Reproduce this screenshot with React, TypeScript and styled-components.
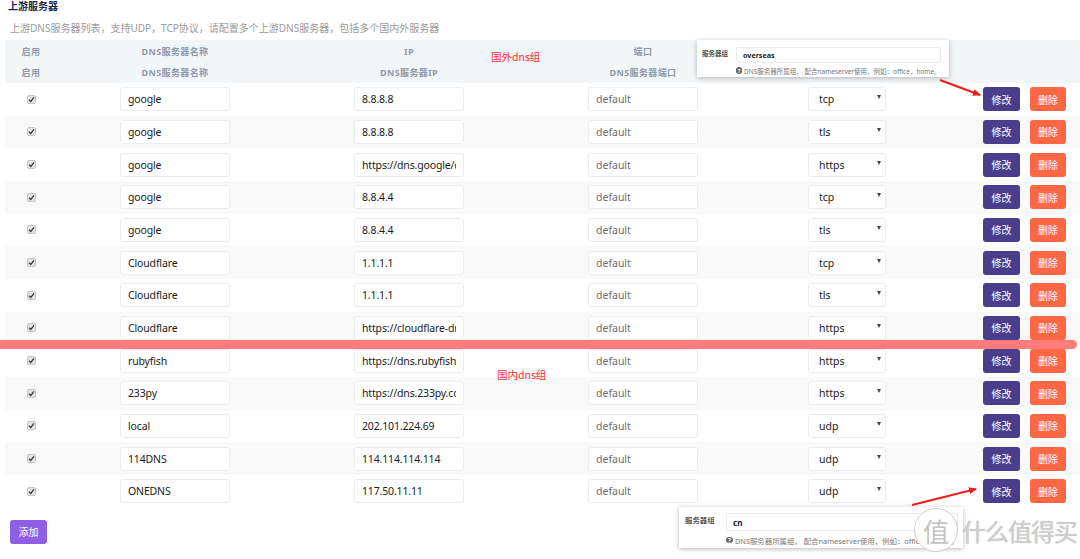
import React from "react";
import styled, { createGlobalStyle, css } from "styled-components";

const GlobalStyle = createGlobalStyle`
  html, body { margin: 0; padding: 0; background: #fff; }
  body { font-family: "Noto Sans", "Noto Sans CJK SC", sans-serif; color: #333; }
  * { box-sizing: border-box; }
`;

const Page = styled.div`
  position: relative;
  width: 1080px;
  height: 559px;
  overflow: hidden;
  background: #fff;
`;

const Title = styled.h3`
  margin: 0;
  padding-left: 8px;
  height: 13px;
  line-height: 13px;
  font-size: 10px;
  font-weight: 700;
  color: #1a2a44;
`;

const Subtitle = styled.p`
  margin: 8px 0 0;
  padding-left: 10px;
  height: 14px;
  line-height: 14px;
  font-size: 10px;
  color: #9a9a9a;
`;

const Table = styled.div`
  margin: 5px 0 0 5px;
`;

const HeaderBand = styled.div`
  background: #f3f6f9;
  padding-top: 0.5px;
  height: 43px;
`;

const rowGrid = css`
  display: grid;
  grid-template-columns: 52px 236px 232px 236px 172px 1fr;
  align-items: center;
`;

const HeaderRow = styled.div`
  ${rowGrid};
  height: 21px;
`;

const HeaderCell = styled.div`
  text-align: center;
  font-size: 9px;
  font-weight: 700;
  letter-spacing: 0.4px;
  color: #8d9aab;
`;

const BodyRow = styled.div`
  ${rowGrid};
  height: 32.67px;
  background: #fff;
  &:nth-child(even) { background: #f9f9f9; }
`;

const Cell = styled.div`
  display: flex;
  justify-content: center;
  align-items: center;
`;

const ActionCell = styled.div`
  display: flex;
  justify-content: flex-end;
  align-items: center;
  gap: 10px;
  padding-right: 14px;
`;

const Check = styled.span`
  display: inline-flex;
  align-items: center;
  justify-content: center;
  width: 9px;
  height: 9px;
  background: #e4e4e4;
  border: 1px solid #c4c4c4;
  border-radius: 2px;
`;

const TextInput = styled.input`
  width: 110px;
  height: 24px;
  padding: 0 7px;
  border: 1px solid #e9edf0;
  border-radius: 3px;
  background: #fff;
  font-family: "Noto Sans", "Noto Sans CJK SC", sans-serif;
  font-size: 10.5px;
  letter-spacing: -0.15px;
  color: #1a1a1a;
  outline: none;
  &::placeholder { color: #6e6e6e; letter-spacing: 0; }
`;

const SelectBox = styled.div`
  width: 78px;
  height: 24px;
  display: flex;
  align-items: center;
  justify-content: space-between;
  padding: 0 4px 0 10px;
  border: 1px solid #e9edf0;
  border-radius: 3px;
  background: #fff;
  font-size: 10.5px;
  color: #222;
`;

const Caret = styled.span`
  width: 0;
  height: 0;
  border-left: 2.5px solid transparent;
  border-right: 2.5px solid transparent;
  border-top: 4px solid #444;
  margin-top: -4px;
`;

const Button = styled.button<{ $kind: "edit" | "del" | "add" }>`
  height: 24px;
  width: ${(p) => (p.$kind === "del" ? 36 : 37)}px;
  border: none;
  border-radius: 3px;
  padding: 0;
  color: #fff;
  font-family: "Noto Sans CJK SC", sans-serif;
  font-size: 10px;
  background: ${(p) =>
    p.$kind === "edit" ? "#4a3e8c" : p.$kind === "del" ? "#fd6744" : "#8e5fe6"};
`;

const AddButton = styled(Button)`
  display: block;
  margin: 12px 0 0 10px;
`;

const Popup = styled.div<{
  $left: number;
  $top: number;
  $width: number;
  $height: number;
  $pad: string;
  $label: number;
  $font: number;
  $inputH: number;
}>`
  position: absolute;
  left: ${(p) => p.$left}px;
  top: ${(p) => p.$top}px;
  width: ${(p) => p.$width}px;
  height: ${(p) => p.$height}px;
  padding: ${(p) => p.$pad};
  background: #fff;
  box-shadow: 0 1px 5px rgba(0, 0, 0, 0.28);
  display: grid;
  grid-template-columns: ${(p) => p.$label}px 1fr;
  grid-template-rows: ${(p) => p.$inputH}px auto;
  font-size: ${(p) => p.$font}px;
  color: #555;
`;

const PopLabel = styled.span`
  font-weight: 700;
  color: #555;
  padding-top: 1px;
`;

const PopInput = styled.div`
  border: 1px solid #e8ecef;
  border-radius: 2px;
  display: flex;
  align-items: center;
  padding-left: 6px;
  font-weight: 700;
  color: #222;
  font-size: 1.1em;
`;

const PopHelp = styled.div`
  grid-column: 2;
  padding-top: 1px;
  white-space: nowrap;
  color: #777;
  display: flex;
  align-items: center;
  gap: 2px;
`;

const HelpIcon = styled.span`
  display: inline-flex;
  align-items: center;
  justify-content: center;
  width: 1.1em;
  height: 1.1em;
  border-radius: 50%;
  background: #666;
  color: #fff;
  font-size: 0.85em;
  font-weight: 700;
`;

const Annotation = styled.span<{ $left: number; $top: number }>`
  position: absolute;
  left: ${(p) => p.$left}px;
  top: ${(p) => p.$top}px;
  font-size: 10.5px;
  line-height: 14px;
  color: #ff2a2a;
  font-family: "Noto Sans CJK SC", sans-serif;
`;

const Highlight = styled.div`
  position: absolute;
  left: 0;
  top: 340px;
  width: 1077px;
  height: 9px;
  background: rgba(255, 110, 110, 0.9);
  border-radius: 0 5px 5px 0;
`;

const Arrows = styled.svg`
  position: absolute;
  left: 0;
  top: 0;
  pointer-events: none;
`;

const Watermark = styled.div`
  position: absolute;
  left: 914px;
  top: 508px;
  display: flex;
  align-items: center;
  gap: 4px;
  font-family: "Noto Sans CJK SC", sans-serif;
  color: #c9c9c9;
`;

const Seal = styled.span`
  width: 44px;
  height: 44px;
  border-radius: 50%;
  border: 1.5px solid #cfcfcf;
  background: rgba(255, 255, 255, 0.9);
  display: flex;
  align-items: center;
  justify-content: center;
  font-size: 26px;
  color: #c4c4c4;
`;

const WatermarkText = styled.span`
  font-size: 24px;
  letter-spacing: -1px;
  color: rgba(210, 210, 210, 0.95);
  text-shadow: 0 0 1px #aaa;
`;

type Row = { name: string; ip: string; proto: string };

const rows: Row[] = [
  { name: "google", ip: "8.8.8.8", proto: "tcp" },
  { name: "google", ip: "8.8.8.8", proto: "tls" },
  { name: "google", ip: "https://dns.google/dns-query", proto: "https" },
  { name: "google", ip: "8.8.4.4", proto: "tcp" },
  { name: "google", ip: "8.8.4.4", proto: "tls" },
  { name: "Cloudflare", ip: "1.1.1.1", proto: "tcp" },
  { name: "Cloudflare", ip: "1.1.1.1", proto: "tls" },
  { name: "Cloudflare", ip: "https://cloudflare-dns.com/dns-query", proto: "https" },
  { name: "rubyfish", ip: "https://dns.rubyfish.cn/dns-query", proto: "https" },
  { name: "233py", ip: "https://dns.233py.com/dns-query", proto: "https" },
  { name: "local", ip: "202.101.224.69", proto: "udp" },
  { name: "114DNS", ip: "114.114.114.114", proto: "udp" },
  { name: "ONEDNS", ip: "117.50.11.11", proto: "udp" },
];

const CheckMark = () => (
  <Check>
    <svg width="7" height="7" viewBox="0 0 8 8">
      <path d="M1.2 4.2 L3.2 6.2 L6.8 1.6" fill="none" stroke="#3a3a3a" strokeWidth="1.5" />
    </svg>
  </Check>
);

export default function App() {
  return (
    <Page>
      <GlobalStyle />
      <Title>上游服务器</Title>
      <Subtitle>上游DNS服务器列表，支持UDP，TCP协议，请配置多个上游DNS服务器，包括多个国内外服务器</Subtitle>
      <Table>
        <HeaderBand>
          <HeaderRow>
            <HeaderCell>启用</HeaderCell>
            <HeaderCell>DNS服务器名称</HeaderCell>
            <HeaderCell>IP</HeaderCell>
            <HeaderCell>端口</HeaderCell>
            <HeaderCell />
            <HeaderCell />
          </HeaderRow>
          <HeaderRow>
            <HeaderCell>启用</HeaderCell>
            <HeaderCell>DNS服务器名称</HeaderCell>
            <HeaderCell>DNS服务器IP</HeaderCell>
            <HeaderCell>DNS服务器端口</HeaderCell>
            <HeaderCell />
            <HeaderCell />
          </HeaderRow>
        </HeaderBand>
        <div>
          {rows.map((r, i) => (
            <BodyRow key={i}>
              <Cell>
                <CheckMark />
              </Cell>
              <Cell>
                <TextInput readOnly value={r.name} />
              </Cell>
              <Cell>
                <TextInput readOnly value={r.ip} />
              </Cell>
              <Cell>
                <TextInput readOnly placeholder="default" />
              </Cell>
              <Cell>
                <SelectBox>
                  <span>{r.proto}</span>
                  <Caret />
                </SelectBox>
              </Cell>
              <ActionCell>
                <Button $kind="edit">修改</Button>
                <Button $kind="del">删除</Button>
              </ActionCell>
            </BodyRow>
          ))}
        </div>
      </Table>
      <AddButton $kind="add">添加</AddButton>

      <Highlight />
      <Annotation $left={491} $top={50}>国外dns组</Annotation>
      <Annotation $left={497} $top={368}>国内dns组</Annotation>

      <Popup $left={697} $top={40} $width={252} $height={37} $pad="7px 13px 0 5px" $label={34} $font={6.5} $inputH={16}>
        <PopLabel>服务器组</PopLabel>
        <PopInput>overseas</PopInput>
        <PopHelp>
          <HelpIcon>?</HelpIcon>
          DNS服务器所属组， 配合nameserver使用，例如：office，home。
        </PopHelp>
      </Popup>

      <Popup $left={679} $top={507} $width={284} $height={41} $pad="6px 10px 0 6px" $label={41} $font={7.4} $inputH={18}>
        <PopLabel>服务器组</PopLabel>
        <PopInput>cn</PopInput>
        <PopHelp>
          <HelpIcon>?</HelpIcon>
          DNS服务器所属组， 配合nameserver使用，例如：office，home。
        </PopHelp>
      </Popup>

      <Arrows width="1080" height="559" viewBox="0 0 1080 559">
        <defs>
          <marker id="ah" markerWidth="8" markerHeight="8" refX="7" refY="4" orient="auto" markerUnits="userSpaceOnUse">
            <path d="M0 0.5 L8 4 L0 7.5 Z" fill="#ee1c1c" />
          </marker>
        </defs>
        <line x1="940" y1="80" x2="980" y2="95" stroke="#ee1c1c" strokeWidth="2" markerEnd="url(#ah)" />
        <line x1="912" y1="505" x2="976" y2="489" stroke="#ee1c1c" strokeWidth="2" markerEnd="url(#ah)" />
      </Arrows>

      <Watermark>
        <Seal>值</Seal>
        <WatermarkText>什么值得买</WatermarkText>
      </Watermark>
    </Page>
  );
}
